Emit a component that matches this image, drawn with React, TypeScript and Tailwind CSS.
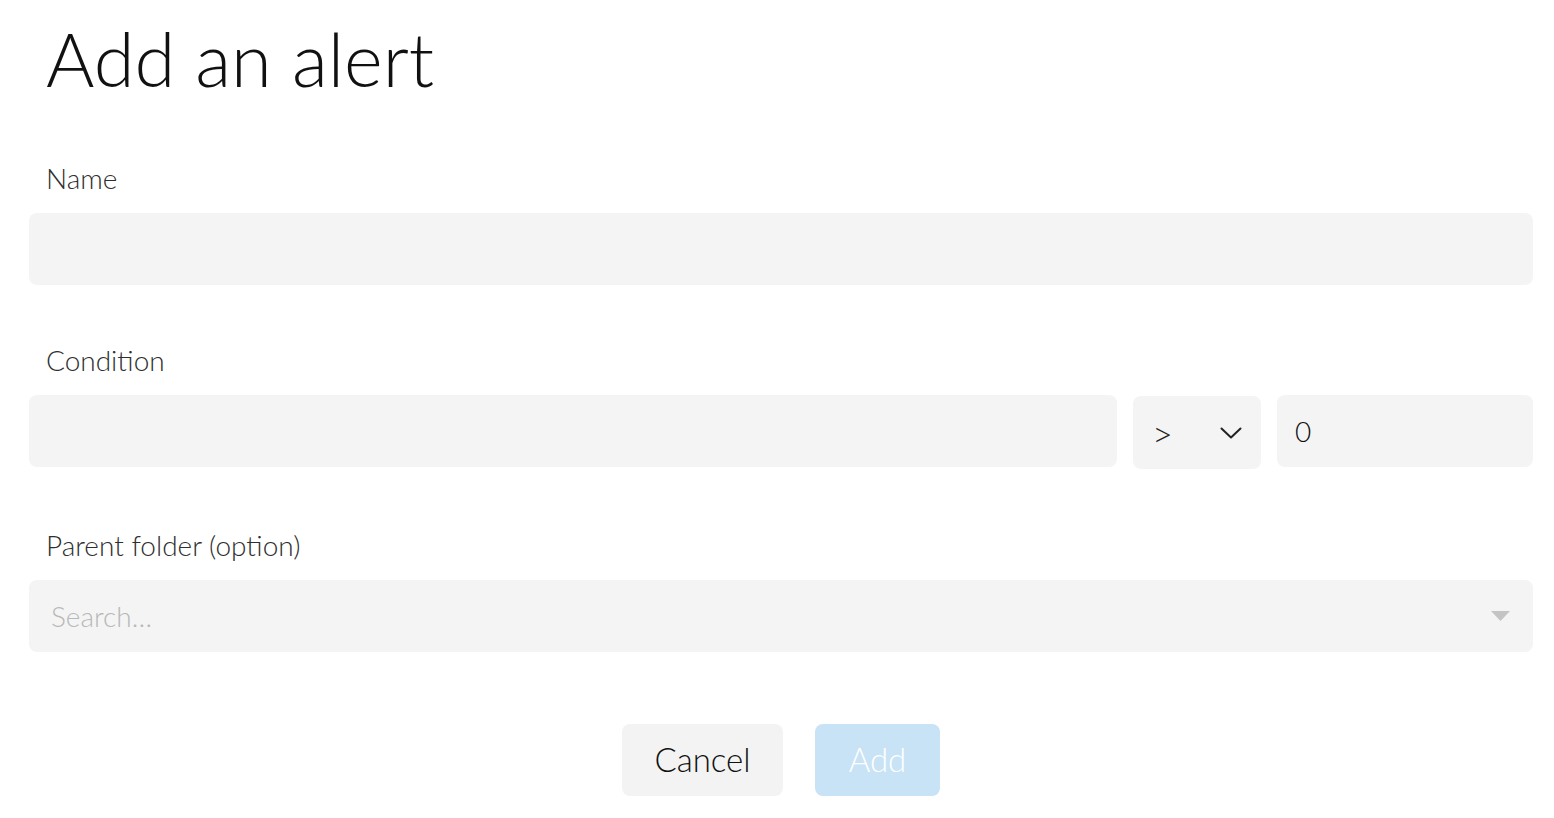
import React from 'react';

const font = { fontFamily: 'Lato, "Noto Sans", sans-serif' };

function Label({ children }: { children: React.ReactNode }) {
  return <div className="h-[28px] pl-[17px] text-[28px] font-light leading-none text-[#2e2e2e]">{children}</div>;
}

export default function App() {
  return (
    <div className="min-h-screen bg-white pl-[29px] pr-[21px]" style={font}>
      <h1 className="pl-[17px] pt-[22px] text-[74px] font-light leading-none text-[#111]">Add an alert</h1>

      <div className="mt-[68px]">
        <Label>Name</Label>
        <div className="mt-[21px] h-[72px] rounded-lg bg-[#f4f4f4]" />
      </div>

      <div className="mt-[61px]">
        <Label>Condition</Label>
        <div className="mt-[21px] flex items-start gap-4">
          <div className="h-[72px] flex-1 rounded-lg bg-[#f4f4f4]" />
          <div className="mt-px flex h-[73px] w-[128px] items-center justify-between rounded-lg bg-[#f4f4f4] pl-[19px] pr-[19px] text-[#222]">
            <span className="text-[36px] font-light leading-none">&gt;</span>
            <svg width="22" height="12" viewBox="0 0 22 12" fill="none">
              <path d="M1.5 1.5 L11 10.5 L20.5 1.5" stroke="#222" strokeWidth="2" strokeLinecap="round" strokeLinejoin="round" />
            </svg>
          </div>
          <div className="flex h-[72px] w-[256px] items-center rounded-lg bg-[#f4f4f4] pl-[18px] text-[28px] font-light text-[#111]">0</div>
        </div>
      </div>

      <div className="mt-[62px]">
        <Label>Parent folder (option)</Label>
        <div className="mt-[21px] flex h-[72px] items-center justify-between rounded-lg bg-[#f4f4f4] pl-[22px] pr-[23px]">
          <span className="text-[28px] font-light text-[#b8b8b8]">Search…</span>
          <svg width="19" height="10" viewBox="0 0 19 10">
            <path d="M0 0 H19 L9.5 10 Z" fill="#c4c4c4" />
          </svg>
        </div>
      </div>

      <div className="mt-[72px] flex justify-center gap-8">
        <button className="h-[72px] w-[161px] rounded-lg bg-[#f3f3f3] text-[33px] font-light text-[#111]">Cancel</button>
        <button className="h-[72px] w-[125px] rounded-lg bg-[#c8e3f5] text-[33px] font-light text-white">Add</button>
      </div>
    </div>
  );
}
